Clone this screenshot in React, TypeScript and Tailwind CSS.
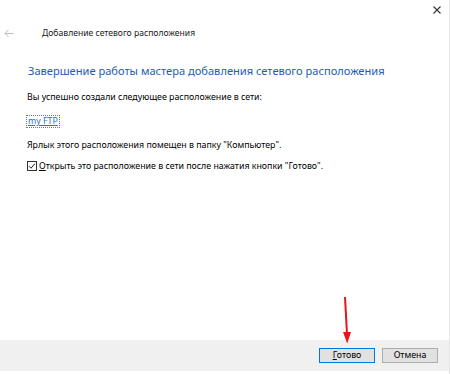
import React from "react";

export default function App() {
  const font = { fontFamily: '"Noto Sans", "Liberation Sans", sans-serif' };
  return (
    <div className="w-[450px] h-[374px] bg-white relative overflow-hidden text-[#000]" style={font}>
      <div className="w-[450px] h-[374px] border-r border-[#e6e6e6] flex flex-col">
        <div className="h-[26px] flex justify-end items-start pr-[8px] pt-[6px]">
          <svg width="8" height="8" viewBox="0 0 8 8">
            <path d="M0.5 0.5 L7.5 7.5 M7.5 0.5 L0.5 7.5" stroke="#333" strokeWidth="1.1" />
          </svg>
        </div>
        <div className="flex items-center h-[14px]">
          <svg width="10" height="9" viewBox="0 0 10 9" className="ml-[4px]">
            <path d="M9.5 4.5 H1 M4.5 1 L1 4.5 L4.5 8" stroke="#bcbcbc" strokeWidth="1" fill="none" />
          </svg>
          <span className="ml-[28px] text-[8.6px] leading-[14px] text-[#1a1a1a] whitespace-nowrap">Добавление сетевого расположения</span>
        </div>
        <div className="pl-[28px] mt-[22px] text-[11.1px] leading-[18px] text-[#1c5bbd] whitespace-nowrap">
          Завершение работы мастера добавления сетевого расположения
        </div>
        <div className="pl-[27px] mt-[10px] text-[8.8px] leading-[14px] whitespace-nowrap">
          Вы успешно создали следующее расположение в сети:
        </div>
        <div className="pl-[27px] mt-[12px] flex">
          <span className="text-[8.8px] leading-[11px] text-[#2a6fd6] underline outline-1 outline-dotted outline-[#777] px-[1px]">my FTP</span>
        </div>
        <div className="pl-[27px] mt-[11px] text-[8.8px] leading-[14px] whitespace-nowrap">
          Ярлык этого расположения помещен в папку "Компьютер".
        </div>
        <div className="pl-[27px] mt-[7px] flex items-center text-[8.8px] leading-[14px] whitespace-nowrap">
          <svg width="10" height="10" viewBox="0 0 10 10" className="mr-[2px]">
            <rect x="0.5" y="0.5" width="9" height="9" fill="#fff" stroke="#333" />
            <path d="M2 5.2 L4 7.2 L8 2.6" stroke="#222" strokeWidth="1" fill="none" />
          </svg>
          <span><span className="underline">О</span>ткрыть это расположение в сети после нажатия кнопки "Готово".</span>
        </div>
        <div className="flex-1" />
        <div className="h-[31px] mb-[3px] bg-[#f0f0f0] flex items-center justify-end pr-[11px] gap-[7px]">
          <button className="w-[56px] h-[15px] bg-[#e1e1e1] border border-[#0078d7] text-[8.8px] leading-[13px] flex items-center justify-center">
            <span><span className="underline">Г</span>отово</span>
          </button>
          <button className="w-[56px] h-[15px] bg-[#e1e1e1] border border-[#adadad] text-[8.8px] leading-[13px] flex items-center justify-center">
            Отмена
          </button>
        </div>
      </div>
      <svg className="absolute left-[340px] top-[296px]" width="12" height="50" viewBox="0 0 12 50">
        <path d="M5 1 L7 38" stroke="#e8141c" strokeWidth="2" fill="none" />
        <path d="M3 36 L11 36 L7.2 47.5 Z" fill="#e8141c" />
      </svg>
    </div>
  );
}
